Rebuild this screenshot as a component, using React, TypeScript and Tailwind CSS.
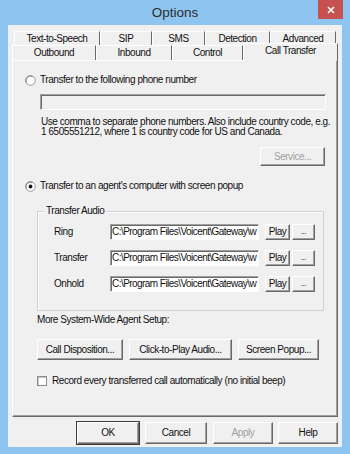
import React from "react";

const font = "font-['Liberation_Sans',Arial,sans-serif] text-[10px] leading-[12px] tracking-[-0.45px] text-[#111]";

const btnBase =
  "flex items-center justify-center bg-[#f0f0f0] border border-t-white border-l-white border-r-[#696969] border-b-[#696969] shadow-[inset_-1px_-1px_0_#a0a0a0]";

function Btn({ w, h, children, disabled, def }: { w: string; h: string; children: React.ReactNode; disabled?: boolean; def?: boolean }) {
  return (
    <div
      className={`${btnBase} ${w} ${h} ${disabled ? "text-[#a0a0a0]" : ""} ${def ? "outline outline-1 outline-[#3c3c3c]" : ""}`}
    >
      {children}
    </div>
  );
}

function Radio({ checked }: { checked?: boolean }) {
  return (
    <svg width="11" height="11" viewBox="0 0 11 11" className="shrink-0">
      <circle cx="5.5" cy="5.5" r="4.8" fill="#fff" stroke="#9a9a9a" strokeWidth="1" />
      <path d="M1.6 7.5 A4.3 4.3 0 0 1 7.5 1.6" fill="none" stroke="#6a6a6a" strokeWidth="0.8" />
      {checked && <circle cx="5.5" cy="5.5" r="1.9" fill="#1a1a1a" />}
    </svg>
  );
}

const field =
  "border border-t-[#a0a0a0] border-l-[#a0a0a0] border-r-white border-b-white shadow-[inset_1px_1px_0_#696969]";

function AudioRow({ label }: { label: string }) {
  return (
    <div className="flex h-[16px] items-center pl-[16px]">
      <div className="w-[56px]">{label}</div>
      <div className={`${field} flex h-[16px] w-[149px] items-center overflow-hidden whitespace-nowrap bg-white pl-[1px] tracking-[-0.55px]`}>
        C:\Program Files\Voicent\Gateway\w
      </div>
      <div className="ml-[6px]">
        <Btn w="w-[25px]" h="h-[16px]">Play</Btn>
      </div>
      <div className="ml-[2px]">
        <Btn w="w-[23px]" h="h-[16px]">
          <span className="text-[8px] leading-[8px]">...</span>
        </Btn>
      </div>
    </div>
  );
}

function Tab({ w, label, selected }: { w: string; label: string; selected?: boolean }) {
  return (
    <div
      className={`flex shrink-0 items-center justify-center bg-[#f0f0f0] border-t border-l border-r border-t-white border-l-white border-r-[#696969] ${w} ${
        selected ? "relative z-10 -mb-[1px] h-[18px] pb-[4px]" : "h-[15px]"
      }`}
    >
      {label}
    </div>
  );
}

export default function App() {
  return (
    <div className={`${font} flex h-[454px] w-[350px] flex-col bg-[#8ec5f0]`}>
      {/* title bar */}
      <div className="relative flex h-[25px] items-center justify-center">
        <span className="text-[13.5px] leading-[16px] tracking-[0px] text-[#2b2b2b]">Options</span>
        <div className="absolute right-[7px] top-0 flex h-[19px] w-[25px] items-center justify-center bg-[#c75050]">
          <svg width="8" height="8" viewBox="0 0 8 8">
            <path d="M1 1 L7 7 M7 1 L1 7" stroke="#fff" strokeWidth="1.6" />
          </svg>
        </div>
      </div>

      {/* client */}
      <div className="mx-[8px] flex h-[422px] flex-col bg-[#f0f0f0]">
        {/* tabs */}
        <div className="mt-[6px] flex pl-[6px]">
          <Tab w="w-[86px]" label="Text-to-Speech" />
          <Tab w="w-[52px]" label="SIP" />
          <Tab w="w-[53px]" label="SMS" />
          <Tab w="w-[65px]" label="Detection" />
          <Tab w="w-[66px]" label="Advanced" />
        </div>
        <div className="-mt-[3px] flex items-end pl-[4px]">
          <Tab w="w-[84px]" label="Outbound" />
          <Tab w="w-[76px]" label="Inbound" />
          <Tab w="w-[71px]" label="Control" />
          <Tab w="w-[95px]" label="Call Transfer" selected />
        </div>

        {/* panel */}
        <div className="mx-[4px] flex h-[357px] flex-col border border-t-white border-l-white border-r-[#696969] border-b-[#696969] shadow-[inset_-1px_-1px_0_#a0a0a0]">
          <div className="ml-[12px] mt-[12px] flex h-[14px] items-center gap-[4px]">
            <Radio />
            <span>Transfer to the following phone number</span>
          </div>
          <div className={`${field} ml-[27px] mt-[7px] h-[16px] w-[286px] bg-[#f0f0f0]`} />
          <div className="ml-[28px] mt-[7px] leading-[10px]">
            Use comma to separate phone numbers. Also include country code, e.g.
            <br />1 6505551212, where 1 is country code for US and Canada.
          </div>
          <div className="mr-[12px] mt-[10px] flex justify-end">
            <Btn w="w-[65px]" h="h-[19px]" disabled>
              Service...
            </Btn>
          </div>
          <div className="ml-[12px] mt-[13px] flex h-[14px] items-center gap-[4px]">
            <Radio checked />
            <span>Transfer to an agent&apos;s computer with screen popup</span>
          </div>

          {/* group box */}
          <div className="relative ml-[24px] mt-[18px] flex w-[287px] flex-col gap-[10px] border border-[#d0d0d0] pb-[18px] pt-[12px] shadow-[inset_1px_1px_0_#fff]">
            <span className="absolute -top-[7px] left-[6px] bg-[#f0f0f0] px-[2px]">Transfer Audio</span>
            <AudioRow label="Ring" />
            <AudioRow label="Transfer" />
            <AudioRow label="Onhold" />
          </div>

          <div className="ml-[24px] mt-[3px] h-[12px]">More System-Wide Agent Setup:</div>
          <div className="ml-[24px] mt-[13px] flex gap-[6px]">
            <Btn w="w-[86px]" h="h-[21px]">Call Disposition...</Btn>
            <Btn w="w-[103px]" h="h-[21px]">Click-to-Play Audio...</Btn>
            <Btn w="w-[81px]" h="h-[21px]">Screen Popup...</Btn>
          </div>
          <div className="ml-[24px] mt-[15px] flex h-[12px] items-center gap-[5px]">
            <div className="h-[10px] w-[10px] border border-[#8a8a8a] bg-white shadow-[inset_1px_1px_0_#c8c8c8]" />
            <span>Record every transferred call automatically (no initial beep)</span>
          </div>
        </div>

        {/* bottom buttons */}
        <div className="mr-[4px] mt-[5px] flex justify-end gap-[6px]">
          <Btn w="w-[62px]" h="h-[22px]" def>OK</Btn>
          <Btn w="w-[62px]" h="h-[22px]">Cancel</Btn>
          <Btn w="w-[60px]" h="h-[22px]" disabled>Apply</Btn>
          <div className="ml-[-1px]">
            <Btn w="w-[60px]" h="h-[22px]">Help</Btn>
          </div>
        </div>
      </div>
    </div>
  );
}
